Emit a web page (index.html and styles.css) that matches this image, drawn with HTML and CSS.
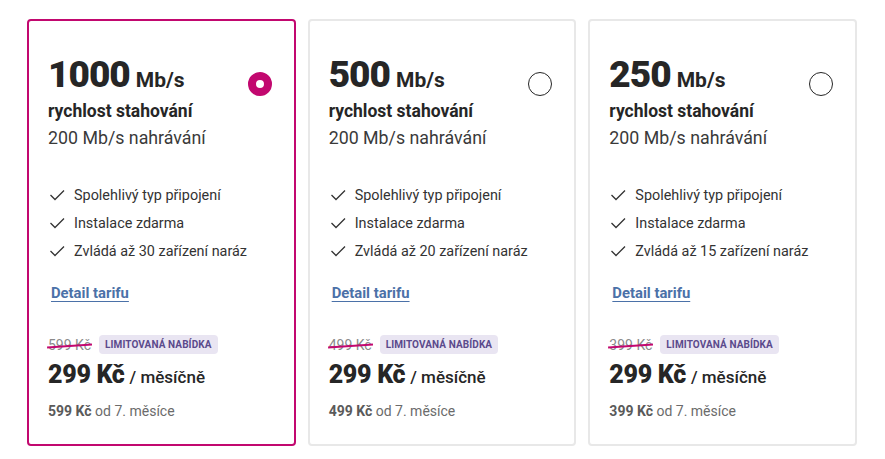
FILE: index.html
```html
<!DOCTYPE html>
<html lang="cs">
<head>
    <meta charset="UTF-8">
    <meta name="viewport" content="width=device-width, initial-scale=1.0">
    <title>Tarify internetu</title>
    <link rel="stylesheet" href="styles.css">
</head>
<body>
    <div class="plans">
        <!-- Tarif 1000 Mb/s (vybraný) -->
        <div class="plan selected">
            <div class="plan-head">
                <div>
                    <div class="speed"><span class="speed-num">1000</span><span class="speed-unit">Mb/s</span></div>
                    <div class="speed-label">rychlost stahování</div>
                    <div class="upload">200 Mb/s nahrávání</div>
                </div>
                <span class="radio"></span>
            </div>
            <ul class="features">
                <li><svg class="check" viewBox="0 0 16 16"><polyline points="1.5,8 6,12.5 15,3.5"/></svg>Spolehlivý typ připojení</li>
                <li><svg class="check" viewBox="0 0 16 16"><polyline points="1.5,8 6,12.5 15,3.5"/></svg>Instalace zdarma</li>
                <li><svg class="check" viewBox="0 0 16 16"><polyline points="1.5,8 6,12.5 15,3.5"/></svg>Zvládá až 30 zařízení naráz</li>
            </ul>
            <a class="detail" href="#">Detail tarifu</a>
            <div class="price">
                <div class="price-old"><span class="old">599 Kč</span><span class="badge">LIMITOVANÁ NABÍDKA</span></div>
                <div class="price-now"><span class="amount">299 Kč</span><span class="period">/ měsíčně</span></div>
                <div class="price-later"><b>599 Kč</b> od 7. měsíce</div>
            </div>
        </div>

        <!-- Tarif 500 Mb/s -->
        <div class="plan">
            <div class="plan-head">
                <div>
                    <div class="speed"><span class="speed-num">500</span><span class="speed-unit">Mb/s</span></div>
                    <div class="speed-label">rychlost stahování</div>
                    <div class="upload">200 Mb/s nahrávání</div>
                </div>
                <span class="radio"></span>
            </div>
            <ul class="features">
                <li><svg class="check" viewBox="0 0 16 16"><polyline points="1.5,8 6,12.5 15,3.5"/></svg>Spolehlivý typ připojení</li>
                <li><svg class="check" viewBox="0 0 16 16"><polyline points="1.5,8 6,12.5 15,3.5"/></svg>Instalace zdarma</li>
                <li><svg class="check" viewBox="0 0 16 16"><polyline points="1.5,8 6,12.5 15,3.5"/></svg>Zvládá až 20 zařízení naráz</li>
            </ul>
            <a class="detail" href="#">Detail tarifu</a>
            <div class="price">
                <div class="price-old"><span class="old">499 Kč</span><span class="badge">LIMITOVANÁ NABÍDKA</span></div>
                <div class="price-now"><span class="amount">299 Kč</span><span class="period">/ měsíčně</span></div>
                <div class="price-later"><b>499 Kč</b> od 7. měsíce</div>
            </div>
        </div>

        <!-- Tarif 250 Mb/s -->
        <div class="plan">
            <div class="plan-head">
                <div>
                    <div class="speed"><span class="speed-num">250</span><span class="speed-unit">Mb/s</span></div>
                    <div class="speed-label">rychlost stahování</div>
                    <div class="upload">200 Mb/s nahrávání</div>
                </div>
                <span class="radio"></span>
            </div>
            <ul class="features">
                <li><svg class="check" viewBox="0 0 16 16"><polyline points="1.5,8 6,12.5 15,3.5"/></svg>Spolehlivý typ připojení</li>
                <li><svg class="check" viewBox="0 0 16 16"><polyline points="1.5,8 6,12.5 15,3.5"/></svg>Instalace zdarma</li>
                <li><svg class="check" viewBox="0 0 16 16"><polyline points="1.5,8 6,12.5 15,3.5"/></svg>Zvládá až 15 zařízení naráz</li>
            </ul>
            <a class="detail" href="#">Detail tarifu</a>
            <div class="price">
                <div class="price-old"><span class="old">399 Kč</span><span class="badge">LIMITOVANÁ NABÍDKA</span></div>
                <div class="price-now"><span class="amount">299 Kč</span><span class="period">/ měsíčně</span></div>
                <div class="price-later"><b>399 Kč</b> od 7. měsíce</div>
            </div>
        </div>
    </div>
</body>
</html>
```

FILE: styles.css
```css
/* Style général */
body {
    margin: 0;
    background-color: #fff;
    font-family: Roboto, "Liberation Sans", sans-serif;
    color: #262626;
}

.plans {
    display: flex;
    gap: 12px;
    padding: 19px 28px 13px 27px;
}

/* Carte d'un tarif */
.plan {
    flex: 1;
    display: flex;
    flex-direction: column;
    height: 427px;
    box-sizing: border-box;
    border: 2px solid #e8e8e8;
    border-radius: 4px;
    padding: 36px 22px 0 19px;
}

.plan.selected {
    border-color: #c2086f;
}

.plan-head {
    display: flex;
    justify-content: space-between;
    align-items: flex-start;
}

.speed {
    display: flex;
    align-items: baseline;
    line-height: 36px;
}

.speed-num {
    font-size: 37px;
    font-weight: 900;
    letter-spacing: -1px;
    margin-right: 6px;
}

.speed-unit {
    font-size: 21px;
    font-weight: 700;
}

.speed-label {
    font-size: 17.5px;
    font-weight: 700;
    margin-top: 2px;
    line-height: 22px;
}

.upload {
    font-size: 17.8px;
    color: #3a3a3a;
    margin-top: 5px;
    line-height: 22px;
}

/* Bouton radio */
.radio {
    width: 24px;
    height: 24px;
    box-sizing: border-box;
    border: 1px solid #262626;
    border-radius: 50%;
    margin-top: 15px;
}

.selected .radio {
    border: 8px solid #c2086f;
}

/* Liste des avantages */
.features {
    list-style: none;
    margin: 32px 0 0 0;
    padding: 0;
}

.features li {
    display: flex;
    align-items: center;
    height: 28px;
    font-size: 14.4px;
    color: #333;
}

.check {
    width: 16px;
    height: 16px;
    margin: 0 9px 0 1px;
    fill: none;
    stroke: #333;
    stroke-width: 1.3;
}

.detail {
    align-self: flex-start;
    margin: 19px 0 0 3px;
    font-size: 14.8px;
    font-weight: 700;
    color: #4b71a8;
    text-decoration: underline;
    text-underline-offset: 3px;
}

/* Prix */
.price {
    margin-top: auto;
    padding-bottom: 25px;
}

.price-old {
    display: flex;
    align-items: center;
    gap: 8px;
}

.old {
    position: relative;
    font-size: 14px;
    color: #8a8a8a;
}

.old::after {
    content: "";
    position: absolute;
    left: -1px;
    right: -1px;
    top: 50%;
    height: 1.5px;
    background-color: #c2086f;
    transform: rotate(-4deg);
}

.badge {
    background-color: #e9e5f2;
    color: #5b4a8c;
    font-size: 10px;
    font-weight: 700;
    padding: 4px 6px;
    border-radius: 4px;
    letter-spacing: 0.1px;
}

.price-now {
    display: flex;
    align-items: baseline;
    gap: 5px;
    margin-top: 6px;
}

.amount {
    font-size: 25px;
    font-weight: 900;
    letter-spacing: -0.3px;
}

.period {
    font-size: 17px;
    font-weight: 500;
}

.price-later {
    margin-top: 14px;
    font-size: 14px;
    color: #6b6b6b;
}

.price-later b {
    color: #5a5a5a;
}
```
